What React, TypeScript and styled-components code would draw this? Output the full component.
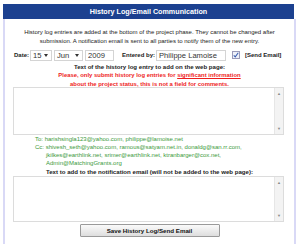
import React from 'react';
import styled, { createGlobalStyle } from 'styled-components';

const GlobalStyle = createGlobalStyle`
	html, body {
		margin: 0;
		padding: 0;
		background: #ffffff;
		font-family: 'Liberation Sans', Arial, sans-serif;
	}
`;

const Panel = styled.div`
	margin: 4px 0 0 3px;
	width: 293px;
	height: 240px;
	display: flex;
	flex-direction: column;
`;

const Header = styled.div`
	width: 291px;
	height: 15px;
	background: #1c4190;
	color: #ffffff;
	font-weight: bold;
	font-size: 7.2px;
	display: flex;
	align-items: center;
	justify-content: center;
`;

const Body = styled.div`
	flex: 1;
	border-left: 2px solid #d9d9f6;
	border-right: 2px solid #d9d9f6;
	padding: 9px 8px 0 8px;
	display: flex;
	flex-direction: column;
	align-items: center;
`;

const Intro = styled.p`
	margin: 0;
	font-size: 6px;
	line-height: 9px;
	color: #222;
	text-align: center;
	white-space: nowrap;
`;

const DateRow = styled.div`
	align-self: stretch;
	display: flex;
	align-items: center;
	margin-top: 2px;
	height: 14px;
	padding-left: 1px;
	white-space: nowrap;
`;

const Label = styled.span<{ $gap?: number }>`
	flex-shrink: 0;
	font-size: 6px;
	font-weight: bold;
	color: #222;
	margin-left: ${(p) => p.$gap ?? 0}px;
	margin-right: 1px;
`;

const Field = styled.div<{ $w: number }>`
	flex-shrink: 0;
	width: ${(p) => p.$w}px;
	height: 11px;
	box-sizing: border-box;
	border: 1px solid #d4d4d4;
	margin-right: 2px;
	display: flex;
	align-items: center;
	justify-content: space-between;
	padding: 0 3px 0 2px;
	font-size: 7.6px;
	color: #333;
	background: #fff;
	overflow: hidden;
`;

const Caret = styled.span`
	width: 0;
	height: 0;
	border-left: 2px solid transparent;
	border-right: 2px solid transparent;
	border-top: 3px solid #333;
`;

const Check = styled.div`
	flex-shrink: 0;
	width: 8px;
	height: 8px;
	box-sizing: border-box;
	border: 1px solid #9a9ab8;
	background: #eef0f8;
	margin-left: 4px;
	margin-right: 5px;
	display: flex;
	align-items: center;
	justify-content: center;
`;

const Heading = styled.div`
	font-size: 6.1px;
	font-weight: bold;
	color: #222;
	line-height: 9px;
	text-align: center;
	white-space: nowrap;
`;

const Warning = styled.div`
	font-size: 5.9px;
	font-weight: bold;
	color: #ee1c1c;
	line-height: 9px;
	text-align: center;
	white-space: nowrap;
	u {
		text-decoration: underline;
	}
`;

const TextBox = styled.div<{ $h: number; $mt: number }>`
	align-self: stretch;
	margin: ${(p) => p.$mt}px 2px 0 0;
	height: ${(p) => p.$h}px;
	box-sizing: border-box;
	border: 1px solid #dcdcdc;
	display: flex;
	background: #fff;
`;

const Area = styled.div`
	flex: 1;
`;

const Scroll = styled.div`
	width: 8px;
	background: #f3f3f3;
	border-left: 1px solid #e6e6e6;
	display: flex;
	flex-direction: column;
	justify-content: space-between;
	align-items: center;
	padding: 3px 0;
	font-size: 4px;
	color: #888;
	line-height: 5px;
`;

const Recipients = styled.div`
	align-self: stretch;
	margin-top: 0;
	padding-left: 22px;
	font-size: 6px;
	line-height: 8px;
	color: #3c9a3c;
	white-space: nowrap;
`;

const Indent = styled.div`
	padding-left: 11px;
`;

const Button = styled.button`
	margin-top: 2px;
	width: 140px;
	height: 13px;
	padding: 0;
	border: 1px solid #9a9a9a;
	border-radius: 1px;
	background: linear-gradient(#fafafa, #dedede);
	font-family: 'Liberation Sans', Arial, sans-serif;
	font-size: 6.2px;
	font-weight: bold;
	color: #111;
`;

const TextArea = ({ h, mt }: { h: number; mt: number }) => (
	<TextBox $h={h} $mt={mt}>
		<Area />
		<Scroll>
			<span>▲</span>
			<span>▼</span>
		</Scroll>
	</TextBox>
);

export default function App() {
	return (
		<>
			<GlobalStyle />
			<Panel>
				<Header>History Log/Email Communication</Header>
				<Body>
					<Intro>
						History log entries are added at the bottom of the project phase. They cannot be changed after
						<br />
						submission. A notification email is sent to all parties to notify them of the new entry.
					</Intro>
					<DateRow>
						<Label>Date:</Label>
						<Field $w={22}>
							15 <Caret />
						</Field>
						<Field $w={29}>
							Jun <Caret />
						</Field>
						<Field $w={29}>2009</Field>
						<Label $gap={6}>Entered by:</Label>
						<Field $w={70}>Philippe Lamoise</Field>
						<Check>
							<svg width="6" height="6" viewBox="0 0 8 8">
								<path d="M1 4.5 L3 6.5 L7 1" stroke="#3b5fb0" strokeWidth="1.4" fill="none" />
							</svg>
						</Check>
						<Label>[Send Email]</Label>
					</DateRow>
					<Heading>Text of the history log entry to add on the web page:</Heading>
					<Warning>
						Please, only submit history log entries for <u>significant information</u>
						<br />
						about the <u>project status</u>, this is not a field for comments.
					</Warning>
					<TextArea h={48} mt={-2} />
					<Recipients>
						<div>To: harishsingla123@yahoo.com, philippe@lamoise.net</div>
						<div>Cc: shivesh_seth@yahoo.com, ramous@satyam.net.in, donaldg@san.rr.com,</div>
						<Indent>jkilkes@earthlink.net, srimer@earthlink.net, ktranbarger@cox.net,</Indent>
						<Indent>Admin@MatchingGrants.org</Indent>
					</Recipients>
					<Heading>Text to add to the notification email (will not be added to the web page):</Heading>
					<TextArea h={46} mt={0} />
					<Button>Save History Log/Send Email</Button>
				</Body>
			</Panel>
		</>
	);
}
